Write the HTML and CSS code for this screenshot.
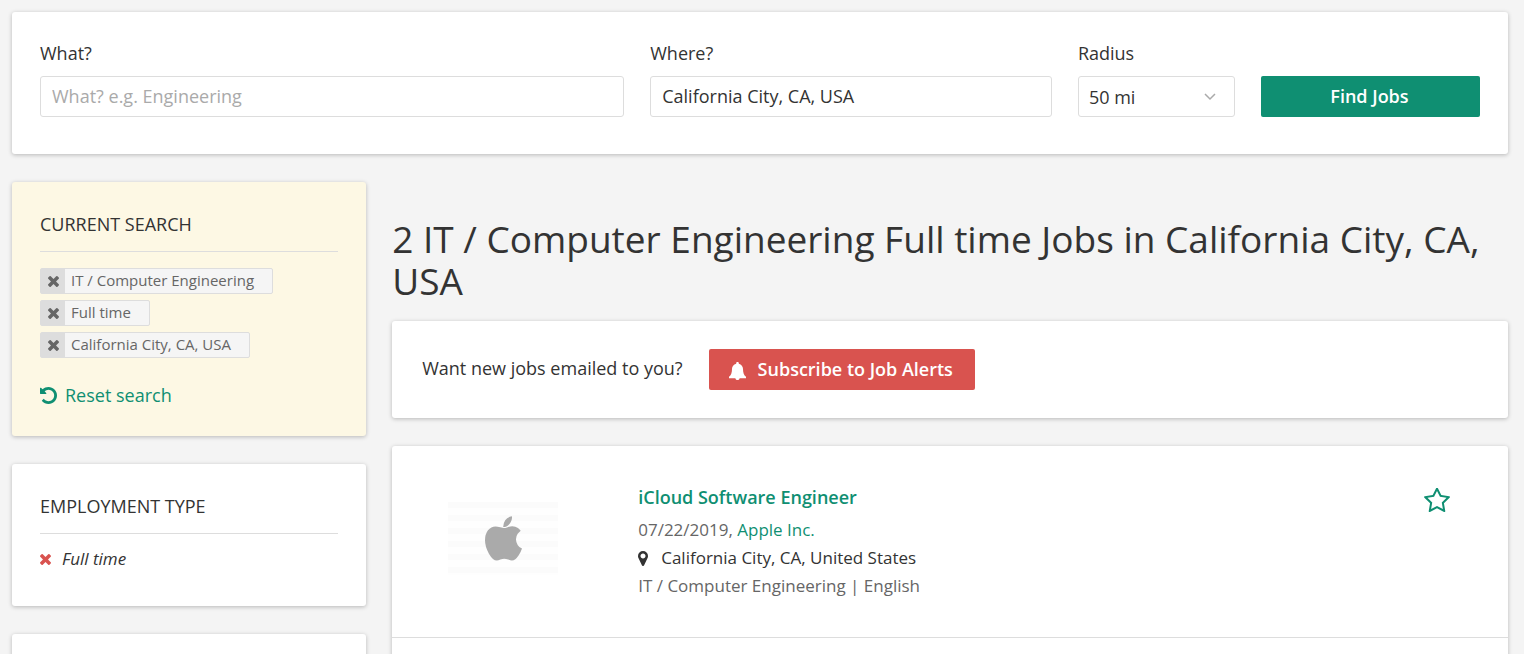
FILE: index.html
```html
<!DOCTYPE html>
<html lang="en">
<head>
    <meta charset="UTF-8">
    <meta name="viewport" content="width=device-width, initial-scale=1.0">
    <title>IT / Computer Engineering Full time Jobs in California City, CA, USA</title>
    <link rel="stylesheet" href="styles.css">
</head>
<body>
    <svg class="sprite" aria-hidden="true">
        <symbol id="icon-times" viewBox="302 302 1188 1188">
            <path d="M1490 1322q0 40-28 68l-136 136q-28 28-68 28t-68-28l-294-294-294 294q-28 28-68 28t-68-28l-136-136q-28-28-28-68t28-68l294-294-294-294q-28-28-28-68t28-68l136-136q28-28 68-28t68 28l294 294 294-294q28-28 68-28t68 28l136 136q28 28 28 68t-28 68l-294 294 294 294q28 28 28 68z" transform="translate(0 -64)"/>
        </symbol>
    </svg>

    <form class="card search">
        <div class="field">
            <label for="what">What?</label>
            <input type="text" id="what" class="control" placeholder="What? e.g. Engineering">
        </div>
        <div class="field">
            <label for="where">Where?</label>
            <input type="text" id="where" class="control" value="California City, CA, USA">
        </div>
        <div class="field">
            <label for="radius">Radius</label>
            <div class="select">
                <select id="radius" class="control">
                    <option>50 mi</option>
                </select>
                <svg class="select-arrow" viewBox="0 0 12 8"><path d="M1 1l5 5 5-5"/></svg>
            </div>
        </div>
        <button type="submit" class="btn btn-primary">Find Jobs</button>
    </form>

    <div class="layout">
        <aside class="sidebar">
            <section class="card panel panel-current">
                <h2 class="panel-title">Current search</h2>
                <ul class="tags">
                    <li class="tag">
                        <button type="button" class="tag-remove" aria-label="Remove"><svg class="icon-times"><use href="#icon-times"/></svg></button>
                        <span class="tag-text">IT / Computer Engineering</span>
                    </li>
                    <li class="tag">
                        <button type="button" class="tag-remove" aria-label="Remove"><svg class="icon-times"><use href="#icon-times"/></svg></button>
                        <span class="tag-text">Full time</span>
                    </li>
                    <li class="tag">
                        <button type="button" class="tag-remove" aria-label="Remove"><svg class="icon-times"><use href="#icon-times"/></svg></button>
                        <span class="tag-text">California City, CA, USA</span>
                    </li>
                </ul>
                <a href="#" class="reset">
                    <svg class="icon-undo" viewBox="128 128 1536 1536"><path d="M1664 896q0 156-61 298t-164 245-245 164-298 61q-172 0-327-72.500t-264-204.500q-7-10-6.500-22.500t8.500-20.500l137-138q10-9 25-9 16 2 23 12 73 95 179 147t225 52q104 0 198.500-40.500t163.500-109.500 109.500-163.500 40.500-198.500-40.500-198.500-109.500-163.500-163.500-109.500-198.500-40.500q-98 0-188 35.500t-160 101.500l137 138q31 30 14 69-17 40-59 40h-448q-26 0-45-19t-19-45v-448q0-42 40-59 39-17 69 14l130 129q107-101 244.500-156.500t284.500-55.500q156 0 298 61t245 164 164 245 61 298z"/></svg>
                    Reset search
                </a>
            </section>

            <section class="card panel">
                <h2 class="panel-title">Employment type</h2>
                <a href="#" class="filter">
                    <svg class="icon-times"><use href="#icon-times"/></svg>
                    Full time
                </a>
            </section>

            <section class="card panel"></section>
        </aside>

        <main>
            <h1>2 IT / Computer Engineering Full time Jobs in California City, CA, USA</h1>

            <div class="card alerts">
                <p class="alerts-text">Want new jobs emailed to you?</p>
                <button type="button" class="btn btn-danger">
                    <svg class="icon-bell" viewBox="0 0 17 18"><path d="M8.500 0c.8 0 1.300.5 1.300 1.300v.5c2.600.6 4.200 2.700 4.200 5.200 0 3.800.9 6.200 3 7.700v1.500H10.600c0 1.100-.9 1.800-2.100 1.800s-2.100-.7-2.100-1.800H0v-1.500C2.100 13.200 3 10.800 3 7c0-2.500 1.600-4.600 4.200-5.200v-.5C7.200.5 7.700 0 8.500 0z"/></svg>
                    Subscribe to Job Alerts
                </button>
            </div>

            <div class="card jobs">
                <article class="job">
                    <div class="job-logo">
                        <svg class="icon-apple" viewBox="192 0 1393 1670"><path d="M1585 1215q-39 125-123 250-129 196-257 196-49 0-140-32-86-32-151-32-61 0-142 33-81 34-132 34-152 0-301-259-147-261-147-503 0-228 113-374 113-144 284-144 72 0 177 30 104 30 138 30 45 0 143-34 102-34 173-34 119 0 213 65 52 36 104 100-79 67-114 118-65 94-65 207 0 124 69 223t158 126zm-376-1173q0 61-29 136-30 75-93 138-54 54-108 72-37 11-104 17 3-149 78-257 74-107 250-148 1 3 2.500 11t2.500 11q0 4 .5 10t.5 10z"/></svg>
                    </div>
                    <div class="job-body">
                        <h3 class="job-title"><a href="#">iCloud Software Engineer</a></h3>
                        <p class="job-meta">07/22/2019, <a href="#">Apple Inc.</a></p>
                        <p class="job-place">
                            <svg class="icon-marker" viewBox="384 128 1024 1536"><path d="M1152 640q0-106-75-181t-181-75-181 75-75 181 75 181 181 75 181-75 75-181zm256 0q0 109-33 179l-364 774q-16 33-47.500 52t-67.500 19-67.500-19-46.500-52l-365-774q-33-70-33-179 0-212 150-362t362-150 362 150 150 362z"/></svg>
                            California City, CA, United States
                        </p>
                        <p class="job-meta">IT / Computer Engineering | English</p>
                    </div>
                    <button type="button" class="job-save" aria-label="Save job">
                        <svg class="icon-star" viewBox="64 128 1664 1500"><path d="M1201 1004l306-297-422-62-189-382-189 382-422 62 306 297-73 421 378-199 377 199zm527-357q0 22-26 48l-363 354 86 500q1 7 1 20 0 50-41 50-19 0-40-12l-449-236-449 236q-22 12-40 12-21 0-31.500-14.500t-10.500-35.500q0-6 2-20l86-500-364-354q-25-27-25-48 0-37 56-46l502-73 225-455q19-41 49-41t49 41l225 455 502 73q56 9 56 46z"/></svg>
                    </button>
                </article>
            </div>
        </main>
    </div>
</body>
</html>
```

FILE: styles.css
```css
* {
    box-sizing: border-box;
}

body {
    margin: 0;
    padding: 12px 16px 0 12px;
    background: #f4f4f4;
    color: #333;
    font-family: "Open Sans", sans-serif;
    font-size: 18px;
    line-height: 26px;
}

h1, h2, h3, p, ul {
    margin: 0;
    padding: 0;
    font-weight: 400;
}

a {
    color: #0f8f72;
    text-decoration: none;
}

button, input, select {
    font: inherit;
    color: inherit;
}

svg {
    flex: none;
    fill: currentColor;
}

.sprite {
    position: absolute;
    width: 0;
    height: 0;
}

.card {
    background: #fff;
    border-radius: 3px;
    box-shadow: 0 1px 4px rgba(0, 0, 0, 0.25);
}

/* Search bar */
.search {
    display: grid;
    grid-template-columns: 8fr 5.5fr 2.15fr 3fr;
    gap: 26px;
    align-items: end;
    padding: 28px 28px 37px;
}

.field label {
    display: block;
    margin-bottom: 10px;
}

.control {
    display: block;
    width: 100%;
    height: 41px;
    padding: 0 11px 2px;
    border: 1px solid #ddd;
    border-radius: 3px;
    background: #fff;
}

.control::placeholder {
    color: #aaa;
}

.select {
    position: relative;
}

.select .control {
    padding: 0 10px;
    appearance: none;
}

.select-arrow {
    position: absolute;
    top: 17px;
    right: 19px;
    width: 12px;
    height: 8px;
    fill: none;
    stroke: #aaa;
    stroke-width: 1.5;
    pointer-events: none;
}

.btn {
    display: flex;
    align-items: center;
    justify-content: center;
    gap: 12px;
    height: 41px;
    padding: 0 22px 2px 20px;
    border: 0;
    border-radius: 2px;
    color: #fff;
    font-weight: 600;
    cursor: pointer;
}

.btn-primary {
    background: #0f8f72;
}

.btn-danger {
    background: #d9534f;
}

/* Columns */
.layout {
    display: grid;
    grid-template-columns: 1fr 3.15fr;
    gap: 26px;
    padding-top: 28px;
}

.sidebar {
    display: flex;
    flex-direction: column;
    gap: 28px;
}

.panel {
    padding: 28px;
}

.panel-current {
    background: #fdf8e4;
}

.panel-title {
    margin-bottom: 16px;
    padding: 1px 0 14px;
    border-bottom: 1px solid #ddd;
    font-size: 18px;
    text-transform: uppercase;
}

.tags {
    display: flex;
    flex-direction: column;
    align-items: flex-start;
    gap: 6px;
    margin-bottom: 24px;
    list-style: none;
}

.tag {
    display: flex;
    height: 26px;
    border: 1px solid #ddd;
    border-radius: 2px;
    background: #f5f5f5;
    color: #666;
    font-size: 15px;
    line-height: 23px;
}

.tag-remove {
    display: flex;
    align-items: center;
    justify-content: center;
    width: 24px;
    padding: 0;
    border: 0;
    background: #ddd;
    cursor: pointer;
}

.tag-text {
    padding: 0 18px 0 6px;
}

.icon-times {
    width: 11px;
    height: 11px;
}

.reset {
    display: flex;
    align-items: center;
    gap: 8px;
}

.icon-undo {
    width: 17px;
    height: 17px;
}

.filter {
    display: flex;
    align-items: center;
    gap: 11px;
    margin: -4px 0 6px;
    color: #333;
    font-size: 17px;
    font-style: italic;
}

.filter .icon-times {
    color: #d9534f;
}

/* Results */
h1 {
    margin: 36px 0 19px;
    font-size: 37px;
    line-height: 42px;
}

.alerts {
    display: flex;
    align-items: center;
    gap: 26px;
    padding: 28px 30px;
}

.alerts-text {
    padding-bottom: 4px;
}

.icon-bell {
    width: 17px;
    height: 18px;
    margin-top: 5px;
}

.jobs {
    margin-top: 28px;
    min-height: 240px;
}

.job {
    display: flex;
    align-items: flex-start;
    padding: 37px 58px;
    border-bottom: 1px solid #ddd;
}

.job-logo {
    display: flex;
    align-items: center;
    justify-content: center;
    width: 110px;
    height: 73px;
    margin: 19px 80px 0 -2px;
    background: repeating-linear-gradient(#fbfbfb 0 6px, #fefefe 6px 13px);
    color: #aaa;
}

.icon-apple {
    width: 37px;
    height: 45px;
}

.job-body {
    flex: 1;
    font-size: 17px;
    line-height: 28px;
}

.job-title {
    margin-bottom: 5px;
    font-size: 18px;
}

.job-title a {
    font-weight: 600;
}

.job-meta {
    color: #666;
}

.job-place {
    display: flex;
    align-items: center;
    gap: 13px;
}

.icon-marker {
    width: 10px;
    height: 15px;
}

.job-save {
    padding: 5px 0 0;
    border: 0;
    background: none;
    color: #0f8f72;
    cursor: pointer;
}

.icon-star {
    display: block;
    width: 26px;
    height: 25px;
}
```
